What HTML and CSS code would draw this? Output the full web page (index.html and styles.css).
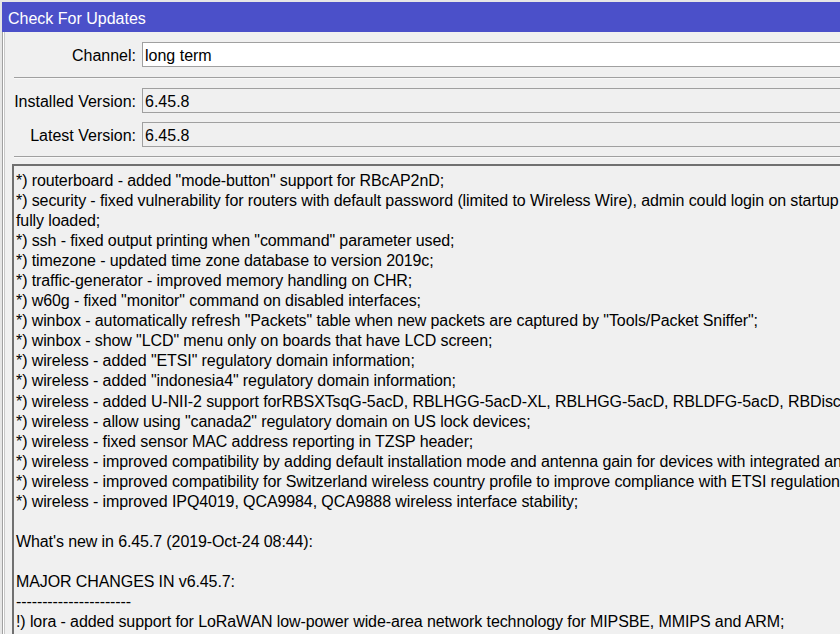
FILE: index.html
```html
<!DOCTYPE html>
<html>
<head>
<meta charset="utf-8">
<link rel="stylesheet" href="styles.css">
</head>
<body>
<div class="window">
  <div class="titlebar">Check For Updates</div>
  <div class="frame">
    <div class="form">
      <div class="row row-channel">
        <div class="label">Channel:</div>
        <div class="field field-input">long term</div>
      </div>
      <div class="sep"></div>
      <div class="row">
        <div class="label">Installed Version:</div>
        <div class="field">6.45.8</div>
      </div>
      <div class="row">
        <div class="label">Latest Version:</div>
        <div class="field">6.45.8</div>
      </div>
      <div class="sep sep-bottom"></div>
    </div>
    <div class="notes">*) routerboard - added "mode-button" support for RBcAP2nD;
*) security - fixed vulnerability for routers with default password (limited to Wireless Wire), admin could login on startup when configuration was not
fully loaded;
*) ssh - fixed output printing when "command" parameter used;
*) timezone - updated time zone database to version 2019c;
*) traffic-generator - improved memory handling on CHR;
*) w60g - fixed "monitor" command on disabled interfaces;
*) winbox - automatically refresh "Packets" table when new packets are captured by "Tools/Packet Sniffer";
*) winbox - show "LCD" menu only on boards that have LCD screen;
*) wireless - added "ETSI" regulatory domain information;
*) wireless - added "indonesia4" regulatory domain information;
*) wireless - added U-NII-2 support forRBSXTsqG-5acD, RBLHGG-5acD-XL, RBLHGG-5acD, RBLDFG-5acD, RBDiscG-5acD;
*) wireless - allow using "canada2" regulatory domain on US lock devices;
*) wireless - fixed sensor MAC address reporting in TZSP header;
*) wireless - improved compatibility by adding default installation mode and antenna gain for devices with integrated antennas;
*) wireless - improved compatibility for Switzerland wireless country profile to improve compliance with ETSI regulations;
*) wireless - improved IPQ4019, QCA9984, QCA9888 wireless interface stability;

What's new in 6.45.7 (2019-Oct-24 08:44):

MAJOR CHANGES IN v6.45.7:
----------------------
!) lora - added support for LoRaWAN low-power wide-area network technology for MIPSBE, MMIPS and ARM;
</div>
  </div>
</div>
</body>
</html>
```

FILE: styles.css
```css
html, body {
  margin: 0;
  padding: 0;
  background: #f0f0f0;
  width: 840px;
  height: 634px;
  overflow: hidden;
  font-family: "Liberation Sans", Arial, sans-serif;
  font-size: 16px;
  color: #000;
}

.window {
  padding: 2px 0 0 2px;
  background: #e6e6e6;
  height: 632px;
}

.titlebar {
  height: 30px;
  box-sizing: border-box;
  background: #4b50c9;
  color: #fff;
  line-height: 30px;
  padding: 2px 0 0 6px;
  white-space: nowrap;
}

.frame {
  background: #f0f0f0;
  border-left: 1px solid #a0a0a0;
  box-shadow: inset 1px 0 0 #ffffff, inset 2px 0 0 #c8c8c8;
  height: 602px;
  overflow: hidden;
}

.form {
  padding: 10px 0 0 11px;
}

.row {
  display: flex;
  align-items: center;
  height: 25px;
  margin-bottom: 9px;
}

.row-channel {
  margin-bottom: 10px;
}

.label {
  width: 122px;
  text-align: right;
  padding-right: 6px;
  padding-top: 2px;
  white-space: nowrap;
  flex: none;
}

.field {
  flex: 1;
  height: 23px;
  line-height: 25px;
  border: 1px solid #a0a0a0;
  border-right: none;
  padding-left: 2px;
  background: #f0f0f0;
  white-space: nowrap;
}

.field-input {
  background: #ffffff;
}

.sep {
  height: 1px;
  background: #a0a0a0;
  border-bottom: 1px solid #f8f8f8;
  margin: 0 0 9px 0;
}

.sep-bottom {
  margin-bottom: 0;
  margin-top: 2px;
}

.notes {
  margin: 6px 0 0 9px;
  border: 2px solid #707070;
  border-right: none;
  border-bottom: none;
  padding: 5px 0 0 2px;
  line-height: 20.05px;
  letter-spacing: -0.1px;
  white-space: pre;
  overflow: hidden;
  height: 500px;
}
```
